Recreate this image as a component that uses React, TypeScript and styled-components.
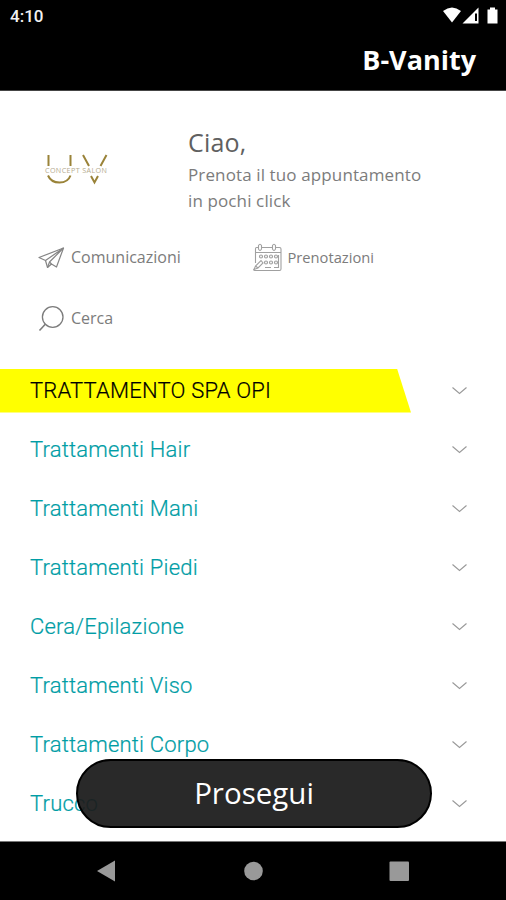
import React from "react";
import styled, { createGlobalStyle } from "styled-components";

const GlobalStyle = createGlobalStyle`
  * { box-sizing: border-box; }
  body { margin: 0; background: #fff; }
`;

const Screen = styled.div`
  position: relative;
  display: flex;
  flex-direction: column;
  width: 506px;
  height: 900px;
  overflow: hidden;
  background: #fff;
  font-family: "Open Sans", "Noto Sans", sans-serif;
`;

const StatusBar = styled.header`
  flex: none;
  display: flex;
  align-items: center;
  justify-content: space-between;
  height: 32px;
  padding: 0 7px 0 10px;
  background: #000;
`;

const Clock = styled.span`
  font: 500 17px/34px Roboto, sans-serif;
  color: #f2f2f2;
`;

const TitleBar = styled.div`
  flex: none;
  display: flex;
  align-items: center;
  justify-content: flex-end;
  height: 59px;
  padding: 0 30px 2px 0;
  background: #000;
  border-bottom: 1px solid #454545;
`;

const Title = styled.h1`
  margin: 0;
  font-size: 27px;
  line-height: 36px;
  font-weight: 700;
  color: #fff;
`;

const Content = styled.main`
  flex: 1;
  min-height: 0;
  overflow: hidden;
`;

const Welcome = styled.section`
  display: flex;
  height: 136px;
  padding: 35px 0 0 40px;
`;

const Logo = styled.svg`
  flex: none;
  width: 148px;
  height: 80px;
`;

const Greeting = styled.h2`
  margin: 0;
  font-size: 25px;
  line-height: 32px;
  font-weight: 400;
  letter-spacing: 0.2px;
  color: #606060;
`;

const Intro = styled.p`
  margin: 4px 0 0;
  width: 242px;
  font-size: 17px;
  line-height: 26px;
  letter-spacing: 0.12px;
  color: #7c7c7c;
`;

const Shortcuts = styled.nav`
  display: grid;
  grid-template-columns: 215px 1fr;
  grid-auto-rows: 60px;
  row-gap: 1px;
  padding-left: 38px;
  height: 134px;
`;

const Shortcut = styled.a<{ $size: number; $gap: number }>`
  display: flex;
  align-items: center;
  gap: ${(p) => p.$gap}px;
  font-size: ${(p) => p.$size}px;
  color: #7c7c7c;

  svg { flex: none; }
`;

const Services = styled.ul`
  margin: 0;
  padding: 0;
  list-style: none;
`;

const Service = styled.li`
  display: flex;
  align-items: center;
  justify-content: space-between;
  height: 59px;
  padding-right: 38px;
`;

const ServiceName = styled.span<{ $active?: boolean }>`
  display: block;
  width: ${(p) => (p.$active ? "411px" : "auto")};
  height: 44px;
  padding-left: 30px;
  background: ${(p) => (p.$active ? "#ffff00" : "none")};
  clip-path: ${(p) => (p.$active ? "polygon(0 0, 397px 0, 100% 100%, 0 100%)" : "none")};
  color: ${(p) => (p.$active ? "#000" : "#009da5")};
  font: 300 22px/43px Roboto, sans-serif;
  letter-spacing: ${(p) => (p.$active ? "0.2px" : "0.2px")};
  -webkit-text-stroke: 0.2px currentColor;
`;

const ContinueButton = styled.button`
  position: absolute;
  left: 76px;
  top: 759px;
  width: 356px;
  height: 69px;
  padding: 0 0 1px;
  border: 2px solid #000;
  border-radius: 35px;
  background: rgba(28, 28, 28, 0.94);
  color: #fff;
  font: 400 29.5px/40px "Open Sans", sans-serif;
`;

const NavBar = styled.footer`
  flex: none;
  display: flex;
  align-items: center;
  justify-content: space-between;
  height: 59px;
  padding: 0 96px;
  border-top: 1px solid #777;
  background: #000;
`;

const services = [
  "TRATTAMENTO SPA OPI",
  "Trattamenti Hair",
  "Trattamenti Mani",
  "Trattamenti Piedi",
  "Cera/Epilazione",
  "Trattamenti Viso",
  "Trattamenti Corpo",
  "Trucco",
];

const StatusIcons = () => (
  <svg width="56" height="20" viewBox="0 0 56 20" fill="#fff">
    <path d="M0 5Q9-2 18 5L9 16.500Z" />
    <path fillRule="evenodd" d="M19.500 17.500L35.500 1.500V17.500ZM32 7.500V15H34V7.500Z" />
    <path d="M44.500 3.500h2.500V1.500h5v2H54.500v14H44.500Z" />
  </svg>
);

const PlaneIcon = () => (
  <svg width="27" height="24" viewBox="0 0 27 24" fill="none" stroke="#858585" strokeWidth="1.2" strokeLinejoin="round">
    <path d="M25.500 3L1 12.500L7.500 15.500L9.500 22.500L13.500 19L18.500 22Z" />
    <path d="M25.500 3L7.500 15.500M25.500 3L11.500 17L9.500 22.500M11.500 17L13.500 19" />
  </svg>
);

const CalendarIcon = () => (
  <svg width="29" height="29" viewBox="0 0 29 29" fill="none" stroke="#a0a0a0" strokeWidth="1.100">
    <path d="M5 4.500H3.500Q2.500 4.500 2.500 6V20M8.500 4.500H19M23 4.500H26.500Q28 4.500 28 6V26Q28 27.500 26.500 27.500H2.500Q.5 27.500 1 26M3 9.500H27.500M25.500 12V24.500H21M18 24.500H12" />
    <path d="M5.500 2.500Q7 0 8.500 2.500V6Q7 9 5.500 6ZM19.500 2.500Q21 0 22.500 2.500V6Q21 9 19.500 6Z" />
    <g strokeWidth="1.200">
      <circle cx="8" cy="13.500" r="1.500" /><circle cx="13" cy="13.500" r="1.500" />
      <circle cx="18" cy="13.500" r="1.500" /><circle cx="23" cy="13.500" r="1.500" />
      <circle cx="13" cy="19.500" r="1.500" /><circle cx="18" cy="19.500" r="1.500" /><circle cx="23" cy="19.500" r="1.500" />
    </g>
    <path d="M1 26.500L2.500 23L8 17.500L10 20L5 25ZM2.500 23L5 25" />
  </svg>
);

const SearchIcon = () => (
  <svg width="27" height="27" viewBox="0 0 27 27" fill="none" stroke="#7c7c7c" strokeWidth="1.300">
    <circle cx="14.700" cy="12" r="10.300" />
    <path d="M7.500 19L1.500 25.500" strokeWidth="1.600" />
  </svg>
);

const Chevron = () => (
  <svg width="17" height="10" viewBox="0 0 17 10" fill="none" stroke="#999" strokeWidth="1.100">
    <path d="M1.500 1.500L8.500 7.500L15.500 1.500" />
  </svg>
);

export default function App() {
  return (
    <Screen>
      <GlobalStyle />
      <StatusBar>
        <Clock>4:10</Clock>
        <StatusIcons />
      </StatusBar>
      <TitleBar>
        <Title>B-Vanity</Title>
      </TitleBar>
      <Content>
        <Welcome>
          <Logo viewBox="0 0 148 80">
            <g fill="none" stroke="#9a8339" strokeWidth="2">
              <path d="M8.500 29V40M30.500 29V40M8 49.500Q11 56.500 19.500 56.500Q28 56.500 30.500 49.500M43 29L49 40M66.500 29L60.500 40M51 50L54.500 56.500L58 50" />
            </g>
            <text x="5" y="47" fontSize="7.200" textLength="62" fill="#b5ac90">CONCEPT SALON</text>
          </Logo>
          <div>
            <Greeting>Ciao,</Greeting>
            <Intro>Prenota il tuo appuntamento in pochi click</Intro>
          </div>
        </Welcome>
        <Shortcuts>
          <Shortcut $size={16} $gap={6}><PlaneIcon />Comunicazioni</Shortcut>
          <Shortcut $size={14.7} $gap={5.5}><CalendarIcon />Prenotazioni</Shortcut>
          <Shortcut $size={16} $gap={6}><SearchIcon />Cerca</Shortcut>
        </Shortcuts>
        <Services>
          {services.map((name, i) => (
            <Service key={name}>
              <ServiceName $active={i === 0}>{name}</ServiceName>
              <Chevron />
            </Service>
          ))}
        </Services>
      </Content>
      <ContinueButton>Prosegui</ContinueButton>
      <NavBar>
        <svg width="20" height="22" viewBox="0 0 20 22" fill="#999"><path d="M1 11L19 .5V21.500Z" /></svg>
        <svg width="22" height="20" viewBox="0 0 22 20" fill="#999"><circle cx="12.500" cy="10" r="9.300" /></svg>
        <svg width="22" height="22" viewBox="0 0 22 22" fill="#999"><rect x="1.500" y="1.500" width="19.500" height="19.500" rx="1" /></svg>
      </NavBar>
    </Screen>
  );
}
